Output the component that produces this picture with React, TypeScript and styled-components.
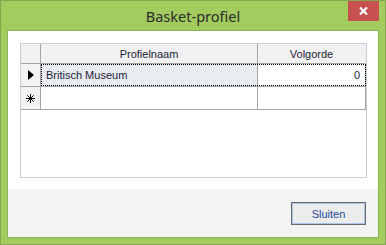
import React from 'react';
import styled, { createGlobalStyle } from 'styled-components';

const GlobalStyle = createGlobalStyle`
  html, body {
    margin: 0;
    padding: 0;
    background: #ffffff;
  }
`;

const Window = styled.div`
  box-sizing: border-box;
  width: 386px;
  height: 245px;
  background: #a2cc5e;
  border: 1px solid #83a64e;
  padding: 0 6px 6px 6px;
  display: flex;
  flex-direction: column;
`;

const TitleBar = styled.div`
  height: 29px;
  display: flex;
  align-items: flex-start;
  position: relative;
`;

const Title = styled.div`
  flex: 1;
  text-align: center;
  font-family: 'Noto Sans', 'Open Sans', sans-serif;
  font-size: 14.5px;
  line-height: 30px;
  color: #2b2b2b;
`;

const CloseButton = styled.div`
  position: absolute;
  right: 0;
  top: 0;
  width: 31px;
  height: 20px;
  background: #c75050;
  display: flex;
  align-items: center;
  justify-content: center;
`;

const Client = styled.div`
  flex: 1;
  background: #ffffff;
  border: 1px solid #8db45a;
  display: flex;
  flex-direction: column;
`;

const GridArea = styled.div`
  flex: 1;
  padding: 12px 12px 11px 12px;
  display: flex;
`;

const Grid = styled.div`
  flex: 1;
  border: 1px solid #c2cdd9;
  background: #ffffff;
  display: flex;
  flex-direction: column;
  font-family: 'Liberation Sans', Arial, sans-serif;
  font-size: 11px;
  color: #1b1b3a;
`;

const Row = styled.div<{ $height: number }>`
  display: grid;
  grid-template-columns: 20px 217px 108px;
  height: ${(p) => p.$height}px;
`;

const HeaderCell = styled.div<{ $last?: boolean }>`
  box-sizing: border-box;
  background: #f1f1f1;
  border-right: 1px solid ${(p) => (p.$last ? '#f1f1f1' : '#a3a3a3')};
  border-bottom: 1px solid #a3a3a3;
  display: flex;
  align-items: center;
  justify-content: center;
  padding-top: 1px;
`;

const RowHeader = styled.div`
  box-sizing: border-box;
  background: #f3f3f3;
  border-right: 1px solid #a3a3a3;
  border-bottom: 1px solid #a3a3a3;
  display: flex;
  align-items: center;
  justify-content: center;
`;

const Cell = styled.div<{ $selected?: boolean; $align?: string }>`
  box-sizing: border-box;
  background: ${(p) => (p.$selected ? '#e9edf1' : '#ffffff')};
  border-right: 1px solid #a3a3a3;
  border-bottom: 1px solid #a3a3a3;
  display: flex;
  align-items: center;
  justify-content: ${(p) => p.$align || 'flex-start'};
  padding: 0 5px;
`;

const FocusRow = styled.div`
  grid-column: 2 / 4;
  display: grid;
  grid-template-columns: 217px 108px;
  position: relative;
`;

const FocusRect = styled.div`
  position: absolute;
  left: 0;
  top: 0;
  right: 0;
  bottom: 1px;
  border: 1px dotted #000000;
  pointer-events: none;
`;

const Footer = styled.div`
  height: 48px;
  background: #f3f3f3;
  display: flex;
  justify-content: flex-end;
  align-items: flex-start;
  padding: 13px 12px 0 0;
  box-sizing: border-box;
`;

const Button = styled.button`
  width: 75px;
  height: 23px;
  box-sizing: border-box;
  border: 1px solid #6a6a6a;
  box-shadow: inset 0 0 0 1px #a9c5eb;
  background: #ececec;
  font-family: 'Liberation Sans', Arial, sans-serif;
  font-size: 11px;
  color: #234a9c;
  padding: 0;
`;

export default function App() {
  return (
    <>
      <GlobalStyle />
      <Window>
        <TitleBar>
          <Title>Basket-profiel</Title>
          <CloseButton>
            <svg width="9" height="8" viewBox="0 0 9 8">
              <path d="M1 0.5 L8 7.5 M8 0.5 L1 7.5" stroke="#ffffff" strokeWidth="2.2" />
            </svg>
          </CloseButton>
        </TitleBar>
        <Client>
          <GridArea>
            <Grid>
              <Row $height={20}>
                <HeaderCell />
                <HeaderCell>Profielnaam</HeaderCell>
                <HeaderCell $last>Volgorde</HeaderCell>
              </Row>
              <Row $height={23}>
                <RowHeader>
                  <svg width="6" height="10" viewBox="0 0 6 10">
                    <path d="M0 0 L6 5 L0 10 Z" fill="#000000" />
                  </svg>
                </RowHeader>
                <FocusRow>
                  <Cell $selected>Britisch Museum</Cell>
                  <Cell $align="flex-end">0</Cell>
                  <FocusRect />
                </FocusRow>
              </Row>
              <Row $height={23}>
                <RowHeader>
                  <svg width="9" height="9" viewBox="0 0 9 9">
                    <path
                      d="M4.5 0 V9 M0 4.5 H9 M1.3 1.3 L7.7 7.7 M7.7 1.3 L1.3 7.7"
                      stroke="#000000"
                      strokeWidth="1"
                    />
                  </svg>
                </RowHeader>
                <Cell />
                <Cell />
              </Row>
            </Grid>
          </GridArea>
          <Footer>
            <Button>Sluiten</Button>
          </Footer>
        </Client>
      </Window>
    </>
  );
}
